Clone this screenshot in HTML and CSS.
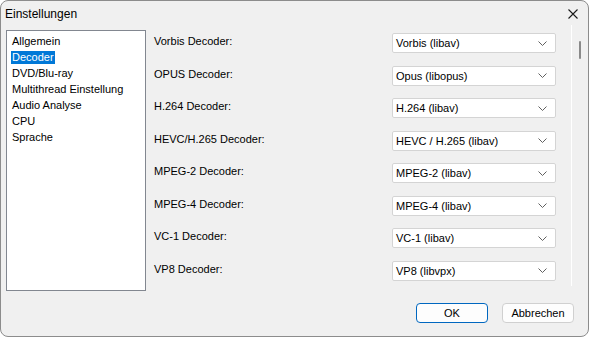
FILE: index.html
```html
<!DOCTYPE html>
<html lang="de">
<head>
<meta charset="utf-8">
<title>Einstellungen</title>
<link rel="stylesheet" href="styles.css">
</head>
<body>
<div class="window">
  <div class="titlebar">
    <span class="title">Einstellungen</span>
    <svg class="close" width="10" height="10" viewBox="0 0 10 10"><path d="M0.5 0.5 L9.5 9.5 M9.5 0.5 L0.5 9.5" stroke="#1a1a1a" stroke-width="1.1" fill="none"/></svg>
  </div>
  <div class="body">
    <ul class="list">
      <li><span>Allgemein</span></li>
      <li class="selected"><span>Decoder</span></li>
      <li><span>DVD/Blu-ray</span></li>
      <li><span>Multithread Einstellung</span></li>
      <li><span>Audio Analyse</span></li>
      <li><span>CPU</span></li>
      <li><span>Sprache</span></li>
    </ul>
    <div class="panel">
      <div class="rows">
        <div class="row"><span class="label">Vorbis Decoder:</span><div class="combo"><span>Vorbis (libav)</span><svg class="chev" width="9" height="5" viewBox="0 0 9 5"><path d="M0.5 0.5 L4.5 4.5 L8.5 0.5" stroke="#606060" fill="none"/></svg></div></div>
        <div class="row"><span class="label">OPUS Decoder:</span><div class="combo"><span>Opus (libopus)</span><svg class="chev" width="9" height="5" viewBox="0 0 9 5"><path d="M0.5 0.5 L4.5 4.5 L8.5 0.5" stroke="#606060" fill="none"/></svg></div></div>
        <div class="row"><span class="label">H.264 Decoder:</span><div class="combo"><span>H.264 (libav)</span><svg class="chev" width="9" height="5" viewBox="0 0 9 5"><path d="M0.5 0.5 L4.5 4.5 L8.5 0.5" stroke="#606060" fill="none"/></svg></div></div>
        <div class="row"><span class="label">HEVC/H.265 Decoder:</span><div class="combo"><span>HEVC / H.265 (libav)</span><svg class="chev" width="9" height="5" viewBox="0 0 9 5"><path d="M0.5 0.5 L4.5 4.5 L8.5 0.5" stroke="#606060" fill="none"/></svg></div></div>
        <div class="row"><span class="label">MPEG-2 Decoder:</span><div class="combo"><span>MPEG-2 (libav)</span><svg class="chev" width="9" height="5" viewBox="0 0 9 5"><path d="M0.5 0.5 L4.5 4.5 L8.5 0.5" stroke="#606060" fill="none"/></svg></div></div>
        <div class="row"><span class="label">MPEG-4 Decoder:</span><div class="combo"><span>MPEG-4 (libav)</span><svg class="chev" width="9" height="5" viewBox="0 0 9 5"><path d="M0.5 0.5 L4.5 4.5 L8.5 0.5" stroke="#606060" fill="none"/></svg></div></div>
        <div class="row"><span class="label">VC-1 Decoder:</span><div class="combo"><span>VC-1 (libav)</span><svg class="chev" width="9" height="5" viewBox="0 0 9 5"><path d="M0.5 0.5 L4.5 4.5 L8.5 0.5" stroke="#606060" fill="none"/></svg></div></div>
        <div class="row"><span class="label">VP8 Decoder:</span><div class="combo"><span>VP8 (libvpx)</span><svg class="chev" width="9" height="5" viewBox="0 0 9 5"><path d="M0.5 0.5 L4.5 4.5 L8.5 0.5" stroke="#606060" fill="none"/></svg></div></div>
      </div>
      <div class="scrollbar"><div class="thumb"></div></div>
    </div>
  </div>
  <div class="buttons">
    <button class="btn default">OK</button>
    <button class="btn">Abbrechen</button>
  </div>
</div>
</body>
</html>
```

FILE: styles.css
```css
html, body {
  margin: 0;
  padding: 0;
  background: #ffffff;
}
body {
  font-family: "Liberation Sans", Arial, sans-serif;
  font-size: 11px;
  color: #000;
}
.window {
  width: 589px;
  height: 337px;
  box-sizing: border-box;
  border: 1px solid #8c8c8c;
  border-radius: 8px;
  background: #f0f0f0;
  display: flex;
  flex-direction: column;
  overflow: hidden;
}
.titlebar {
  height: 29px;
  flex: none;
  display: flex;
  align-items: center;
  justify-content: space-between;
  padding: 0 10px 4px 4px;
  box-sizing: border-box;
}
.title {
  font-size: 12px;
  line-height: 14px;
}
.close {
  display: block;
}
.body {
  display: flex;
  height: 261px;
  flex: none;
}
.list {
  list-style: none;
  margin: 0 0 0 5px;
  padding: 2px 0 0 4px;
  width: 140px;
  height: 261px;
  box-sizing: border-box;
  background: #fff;
  border: 1px solid #828790;
  flex: none;
}
.list li {
  height: 16px;
  display: flex;
  align-items: center;
}
.list li span {
  display: inline-block;
  line-height: 13px;
  padding: 0 1px;
}
.list li.selected span {
  background: #0078d7;
  color: #fff;
}
.panel {
  flex: 1;
  display: flex;
  margin-top: -5px;
}
.rows {
  width: 426px;
  padding: 8px 0 0 8px;
  box-sizing: border-box;
  display: grid;
  grid-auto-rows: 32.57px;
  align-content: start;
  border-right: 1px solid #ffffff;
  height: 261px;
}
.row {
  display: flex;
  align-items: flex-start;
  justify-content: space-between;
  padding-right: 15px;
}
.label {
  line-height: 14px;
  margin-top: 1px;
}
.combo {
  width: 164px;
  height: 20px;
  box-sizing: border-box;
  background: #fff;
  border: 1px solid #d4d4d4;
  border-radius: 2px;
  display: flex;
  align-items: center;
  justify-content: space-between;
  padding: 0 8px 0 3px;
}
.combo span {
  line-height: 14px;
}
.chev {
  display: block;
}
.scrollbar {
  flex: 1;
  position: relative;
}
.thumb {
  position: absolute;
  left: 7px;
  top: 16px;
  width: 2px;
  height: 18px;
  background: #8a8a8a;
  border-radius: 1px;
}
.buttons {
  display: flex;
  justify-content: flex-end;
  gap: 14px;
  padding: 12px 14px 0 0;
}
.btn {
  width: 72px;
  height: 20px;
  box-sizing: border-box;
  font-family: "Liberation Sans", Arial, sans-serif;
  font-size: 11px;
  line-height: 14px;
  padding: 0;
  background: #fdfdfd;
  border: 1px solid #d0d0d0;
  border-radius: 4px;
  color: #000;
}
.btn.default {
  border: 1px solid #0067c0;
}
```
